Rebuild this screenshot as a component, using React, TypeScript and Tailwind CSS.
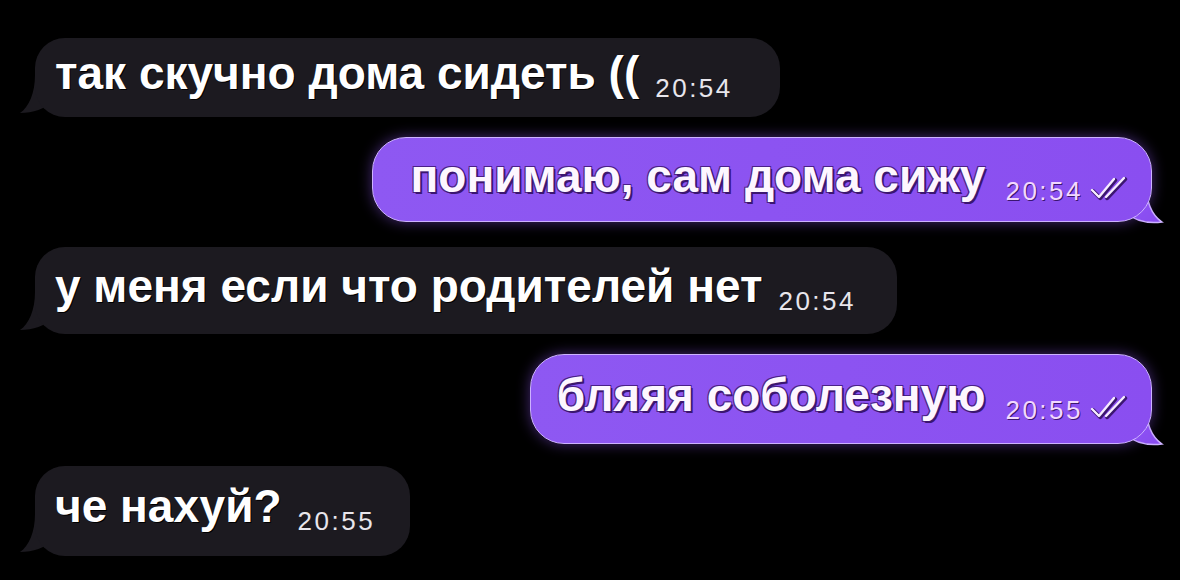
import React from "react";

const FONT = { fontFamily: '"Liberation Sans", Arial, sans-serif' };

function Checks() {
  return (
    <svg width="40" height="26" viewBox="0 0 40 26" className="ml-[6px]">
      <g fill="none" strokeLinecap="round" strokeLinejoin="round">
        <g stroke="#3b1670" strokeWidth="4" transform="translate(1.2 1.2)">
          <path d="M3 15 L10 22 L25 4" />
          <path d="M17 22 L35 3" />
        </g>
        <g stroke="#f6ecff" strokeWidth="2.4">
          <path d="M3 15 L10 22 L25 4" />
          <path d="M17 22 L35 3" />
        </g>
      </g>
    </svg>
  );
}

type Props = { text: string; time: string; box: string };

function Incoming({ text, time, box }: Props) {
  return (
    <div className={`relative self-start ml-[35px] ${box}`}>
      {/* bubble tail, bottom-left */}
      <svg className="absolute left-[-16px] bottom-[2px]" width="40" height="40" viewBox="0 0 40 40">
        <path d="M16 0 C16 18 10 32 1 38 C14 38 26 34 34 26 L34 0 Z" fill="#1c1a20" />
      </svg>
      <div className="relative flex h-full w-full items-center rounded-[30px] bg-[#1c1a20] pl-[20px]">
        <div className="flex -translate-y-[5px] items-baseline">
          <span
            className="text-[46px] font-bold leading-none text-white [text-shadow:1px_1px_0_#000]"
            style={FONT}
          >
            {text}
          </span>
          <span
            className="ml-[16px] translate-y-[8px] text-[26px] leading-none tracking-[2.5px] text-[#e8e6ec]"
            style={FONT}
          >
            {time}
          </span>
        </div>
      </div>
    </div>
  );
}

function Outgoing({ text, time, box }: Props) {
  return (
    <div className={`relative self-end mr-[28px] ${box}`}>
      {/* bubble tail, bottom-right */}
      <svg className="absolute right-[-12px] bottom-[-4px]" width="44" height="44" viewBox="0 0 44 44">
        <path
          d="M0 0 L26 0 C26 18 30 32 42 40 C28 42 14 38 4 30 Z"
          fill="#8a4ef0"
          stroke="#cdb2ff"
          strokeWidth="1.5"
        />
      </svg>
      <div className="relative flex h-full w-full items-center justify-end rounded-[34px] border-[1.5px] border-[#cdb2ff] bg-gradient-to-r from-[#8e58f2] to-[#8a4ef0] pr-[22px] shadow-[0_0_14px_rgba(150,90,255,0.45)]">
        <div className="flex -translate-y-[4px] items-baseline">
          <span
            className="text-[46px] font-bold leading-none text-[#fdf6ff] [text-shadow:2px_2px_0_#3b1670,-1px_-1px_0_#4a2088,1px_-1px_0_#4a2088,-1px_1px_0_#4a2088]"
            style={FONT}
          >
            {text}
          </span>
          <span
            className="ml-[20px] translate-y-[8px] text-[26px] leading-none tracking-[2.5px] text-[#f2d8ff] [text-shadow:1px_1px_0_#3b1670]"
            style={FONT}
          >
            {time}
          </span>
          <span className="translate-y-[9px]">
            <Checks />
          </span>
        </div>
      </div>
    </div>
  );
}

export default function App() {
  return (
    <div className="flex h-[580px] w-[1180px] flex-col overflow-hidden bg-black">
      <Incoming text="так скучно дома сидеть ((" time="20:54" box="mt-[38px] w-[745px] h-[79px]" />
      <Outgoing text="понимаю, сам дома сижу" time="20:54" box="mt-[20px] w-[780px] h-[85px]" />
      <Incoming text="у меня если что родителей нет" time="20:54" box="mt-[25px] w-[862px] h-[87px]" />
      <Outgoing text="бляяя соболезную" time="20:55" box="mt-[20px] w-[622px] h-[90px]" />
      <Incoming text="че нахуй?" time="20:55" box="mt-[22px] w-[375px] h-[90px]" />
    </div>
  );
}
